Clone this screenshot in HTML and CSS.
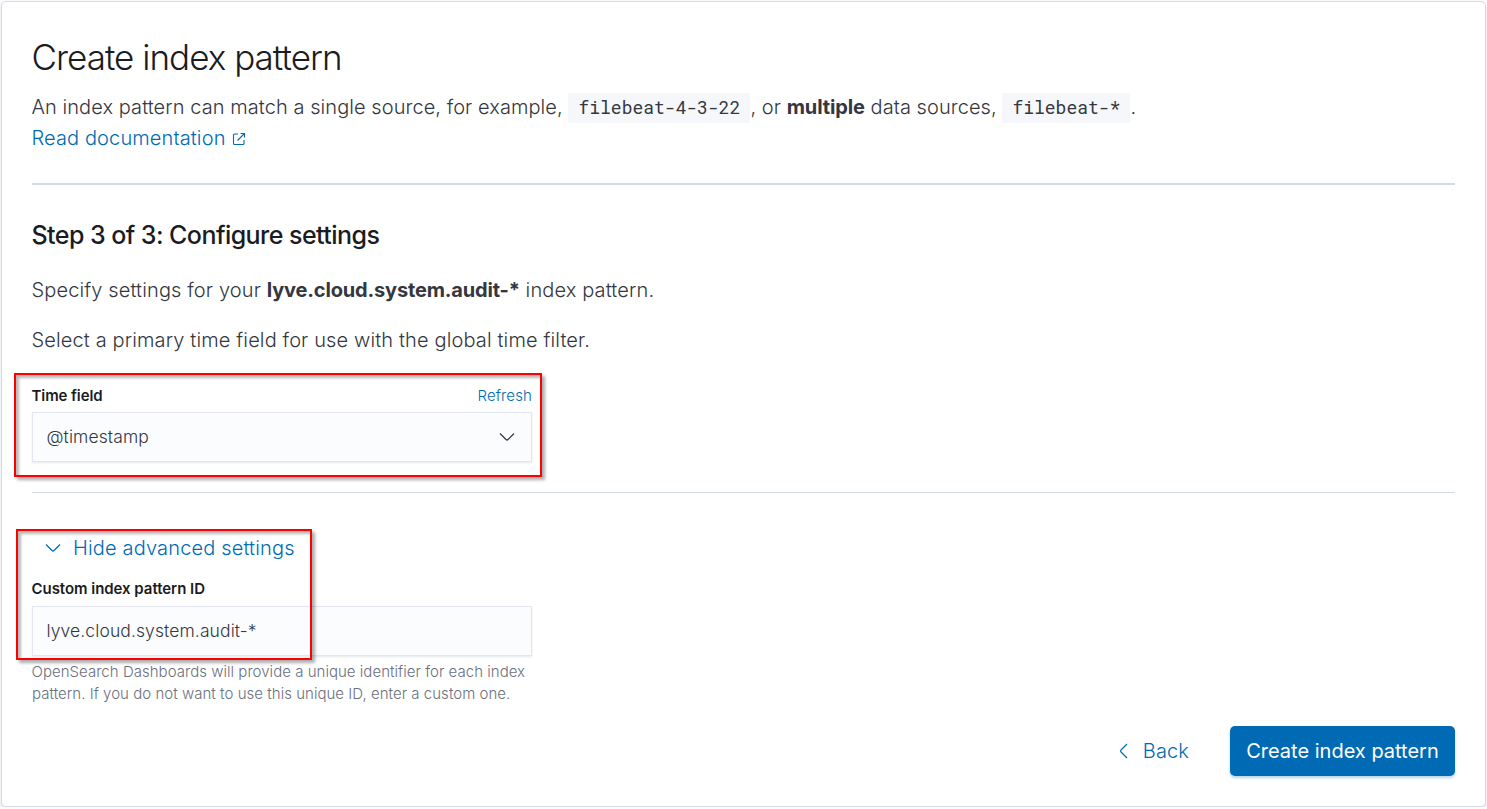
FILE: index.html
```html
<!DOCTYPE html>
<html lang="en">
<head>
<meta charset="utf-8">
<title>Create index pattern</title>
<link rel="stylesheet" href="styles.css">
</head>
<body>
<main class="panel">
  <h1 class="title">Create index pattern</h1>
  <div class="intro"><p class="intro-text">An index pattern can match a single source, for example, <code class="code">filebeat-4-3-22</code>, or <strong>multiple</strong> data sources, <code class="code">filebeat-*</code>.</p>
    <a class="link doc-link"><span>Read documentation</span><svg class="ext-icon" viewBox="0 0 14 14"><path d="M6 2H2.500Q1.500 2 1.500 3v8.500q0 1 1 1H11q1 0 1-1V8M8.500 1.500h4v4M12.500 1.500L5.500 8.500"/></svg></a>
  </div>
  <hr class="rule rule-main">
  <h2 class="step">Step 3 of 3: Configure settings</h2>
  <p class="copy copy-first">Specify settings for your <strong>lyve.cloud.system.audit-*</strong> index pattern.</p>
  <p class="copy">Select a primary time field for use with the global time filter.</p>
  <section class="field time-field">
    <div class="label-row"><label class="label">Time field</label><a class="link refresh">Refresh</a></div>
    <div class="control"><span>@timestamp</span><svg class="chevron" viewBox="0 0 16 16"><path d="M1 4.500l6 6q1 1 2 0l6-6"/></svg></div>
    <div class="highlight highlight-time"></div>
  </section>
  <hr class="rule rule-thin">
  <section class="field advanced">
    <a class="link toggle"><svg class="chevron" viewBox="0 0 16 16"><path d="M1 4.500l6 6q1 1 2 0l6-6"/></svg><span>Hide advanced settings</span></a>
    <label class="label">Custom index pattern ID</label>
    <div class="control"><span>lyve.cloud.system.audit-*</span></div>
    <p class="help">OpenSearch Dashboards will provide a unique identifier for each index<br>pattern. If you do not want to use this unique ID, enter a custom one.</p>
    <div class="highlight highlight-advanced"></div>
  </section>
  <footer class="actions">
    <a class="link back"><svg class="chevron-left" viewBox="0 0 16 16"><path d="M12 1L6 7q-1 1 0 2l6 6"/></svg><span>Back</span></a>
    <button class="primary">Create index pattern</button>
  </footer>
</main>
</body>
</html>
```

FILE: styles.css
```css
* { box-sizing: border-box; }
body { margin: 0; background: #fafbfd; color: #343741; font-family: Inter, "Liberation Sans", sans-serif; font-weight: 350; }
h1, h2, p { margin: 0; }
h1, h2, p, .doc-link, .label { text-indent: -.5px; }
svg { fill: none; stroke: currentColor; flex: none; }
.panel { margin: 1px 1px 0; width: 1485px; height: 806px; padding: 30px 30px 0; border: 1px solid #d3dae6; border-radius: 5px; background: #fff; box-shadow: 0 2px 3px rgba(152, 162, 179, .25); }
.title { font-size: 35px; line-height: 50px; font-weight: 300; letter-spacing: -.98px; color: #1a1c21; white-space: nowrap; }
.intro { margin-top: 10px; font-size: 20px; line-height: 31px; }
.intro-text { height: 31px; white-space: nowrap; letter-spacing: .065px; }
.intro-text strong { letter-spacing: -.12px; }
.code { font: 400 18px/30px "Roboto Mono", "Liberation Mono", monospace; letter-spacing: 0; background: #f5f7fa; padding: 2px 10px 4px; }
.link { color: #006bb4; letter-spacing: .12px; }
.doc-link { display: flex; align-items: center; gap: 6px; height: 31px; }
.ext-icon { width: 14px; height: 14px; stroke-width: 1.1; }
.rule { margin: 0; border: 0; background: #d3dae6; height: 1px; }
.rule-main { height: 2px; margin-top: 29px; }
.step { margin-top: 35px; font-size: 25px; line-height: 31px; font-weight: 500; letter-spacing: -.55px; color: #1a1c21; }
.copy { margin-top: 20px; font-size: 20px; line-height: 30px; white-space: nowrap; letter-spacing: .13px; }
.copy-first { margin-top: 24px; }
.copy strong { letter-spacing: -.16px; }
.field { position: relative; width: 500px; }
.time-field { padding-top: 31px; }
.label-row { display: flex; justify-content: space-between; height: 26px; align-items: flex-start; line-height: 20px; }
.label { font-size: 15px; font-weight: 600; color: #1a1c21; line-height: 22px; letter-spacing: -.04px; }
.label-row .label { line-height: 20px; letter-spacing: -.1px; }
.refresh { font-size: 15px; line-height: 20px; }
.control { width: 500px; height: 50px; border: 1px solid #e3e6f0; background: #fbfcfd; box-shadow: 0 1px 2px rgba(152, 162, 179, .25); display: flex; align-items: center; justify-content: space-between; padding: 0 16px 2px 13.500px; font-size: 17.5px; letter-spacing: .1px; }
.chevron { width: 16px; height: 16px; stroke-width: 1.2; }
.control .chevron { margin-top: 2px; }
.rule-thin { margin-top: 30px; }
.highlight { position: absolute; border: 2px solid #f00; box-shadow: 3px 3px 3px rgba(0,0,0,.32), inset 3px 3px 3px rgba(0,0,0,.28); }
.highlight-time { left: -18px; top: 18px; width: 528px; height: 104px; }
.advanced { margin-top: 39px; }
.toggle { display: flex; align-items: center; gap: 12px; padding-left: 13px; height: 31px; font-size: 20px; letter-spacing: .16px; }
.advanced .label { display: block; margin: 15px 0 6px; }
.help { margin-top: 5px; font-size: 15px; line-height: 22px; color: #69707d; white-space: nowrap; letter-spacing: .03px; }
.highlight-advanced { left: -16px; top: -3px; width: 296px; height: 131px; }
.actions { display: flex; justify-content: flex-end; align-items: center; margin-top: 21px; gap: 41px; }
.back { display: flex; align-items: center; gap: 12px; font-size: 20px; }
.chevron-left { width: 16px; height: 16px; stroke-width: 1.2; }
.primary { width: 225px; height: 50px; padding: 0; border: 0; border-radius: 5px; background: #006bb4; color: #fff; font: 20px Inter, sans-serif; white-space: nowrap; box-shadow: 0 2px 3px rgba(0,107,180,.3); }
```
